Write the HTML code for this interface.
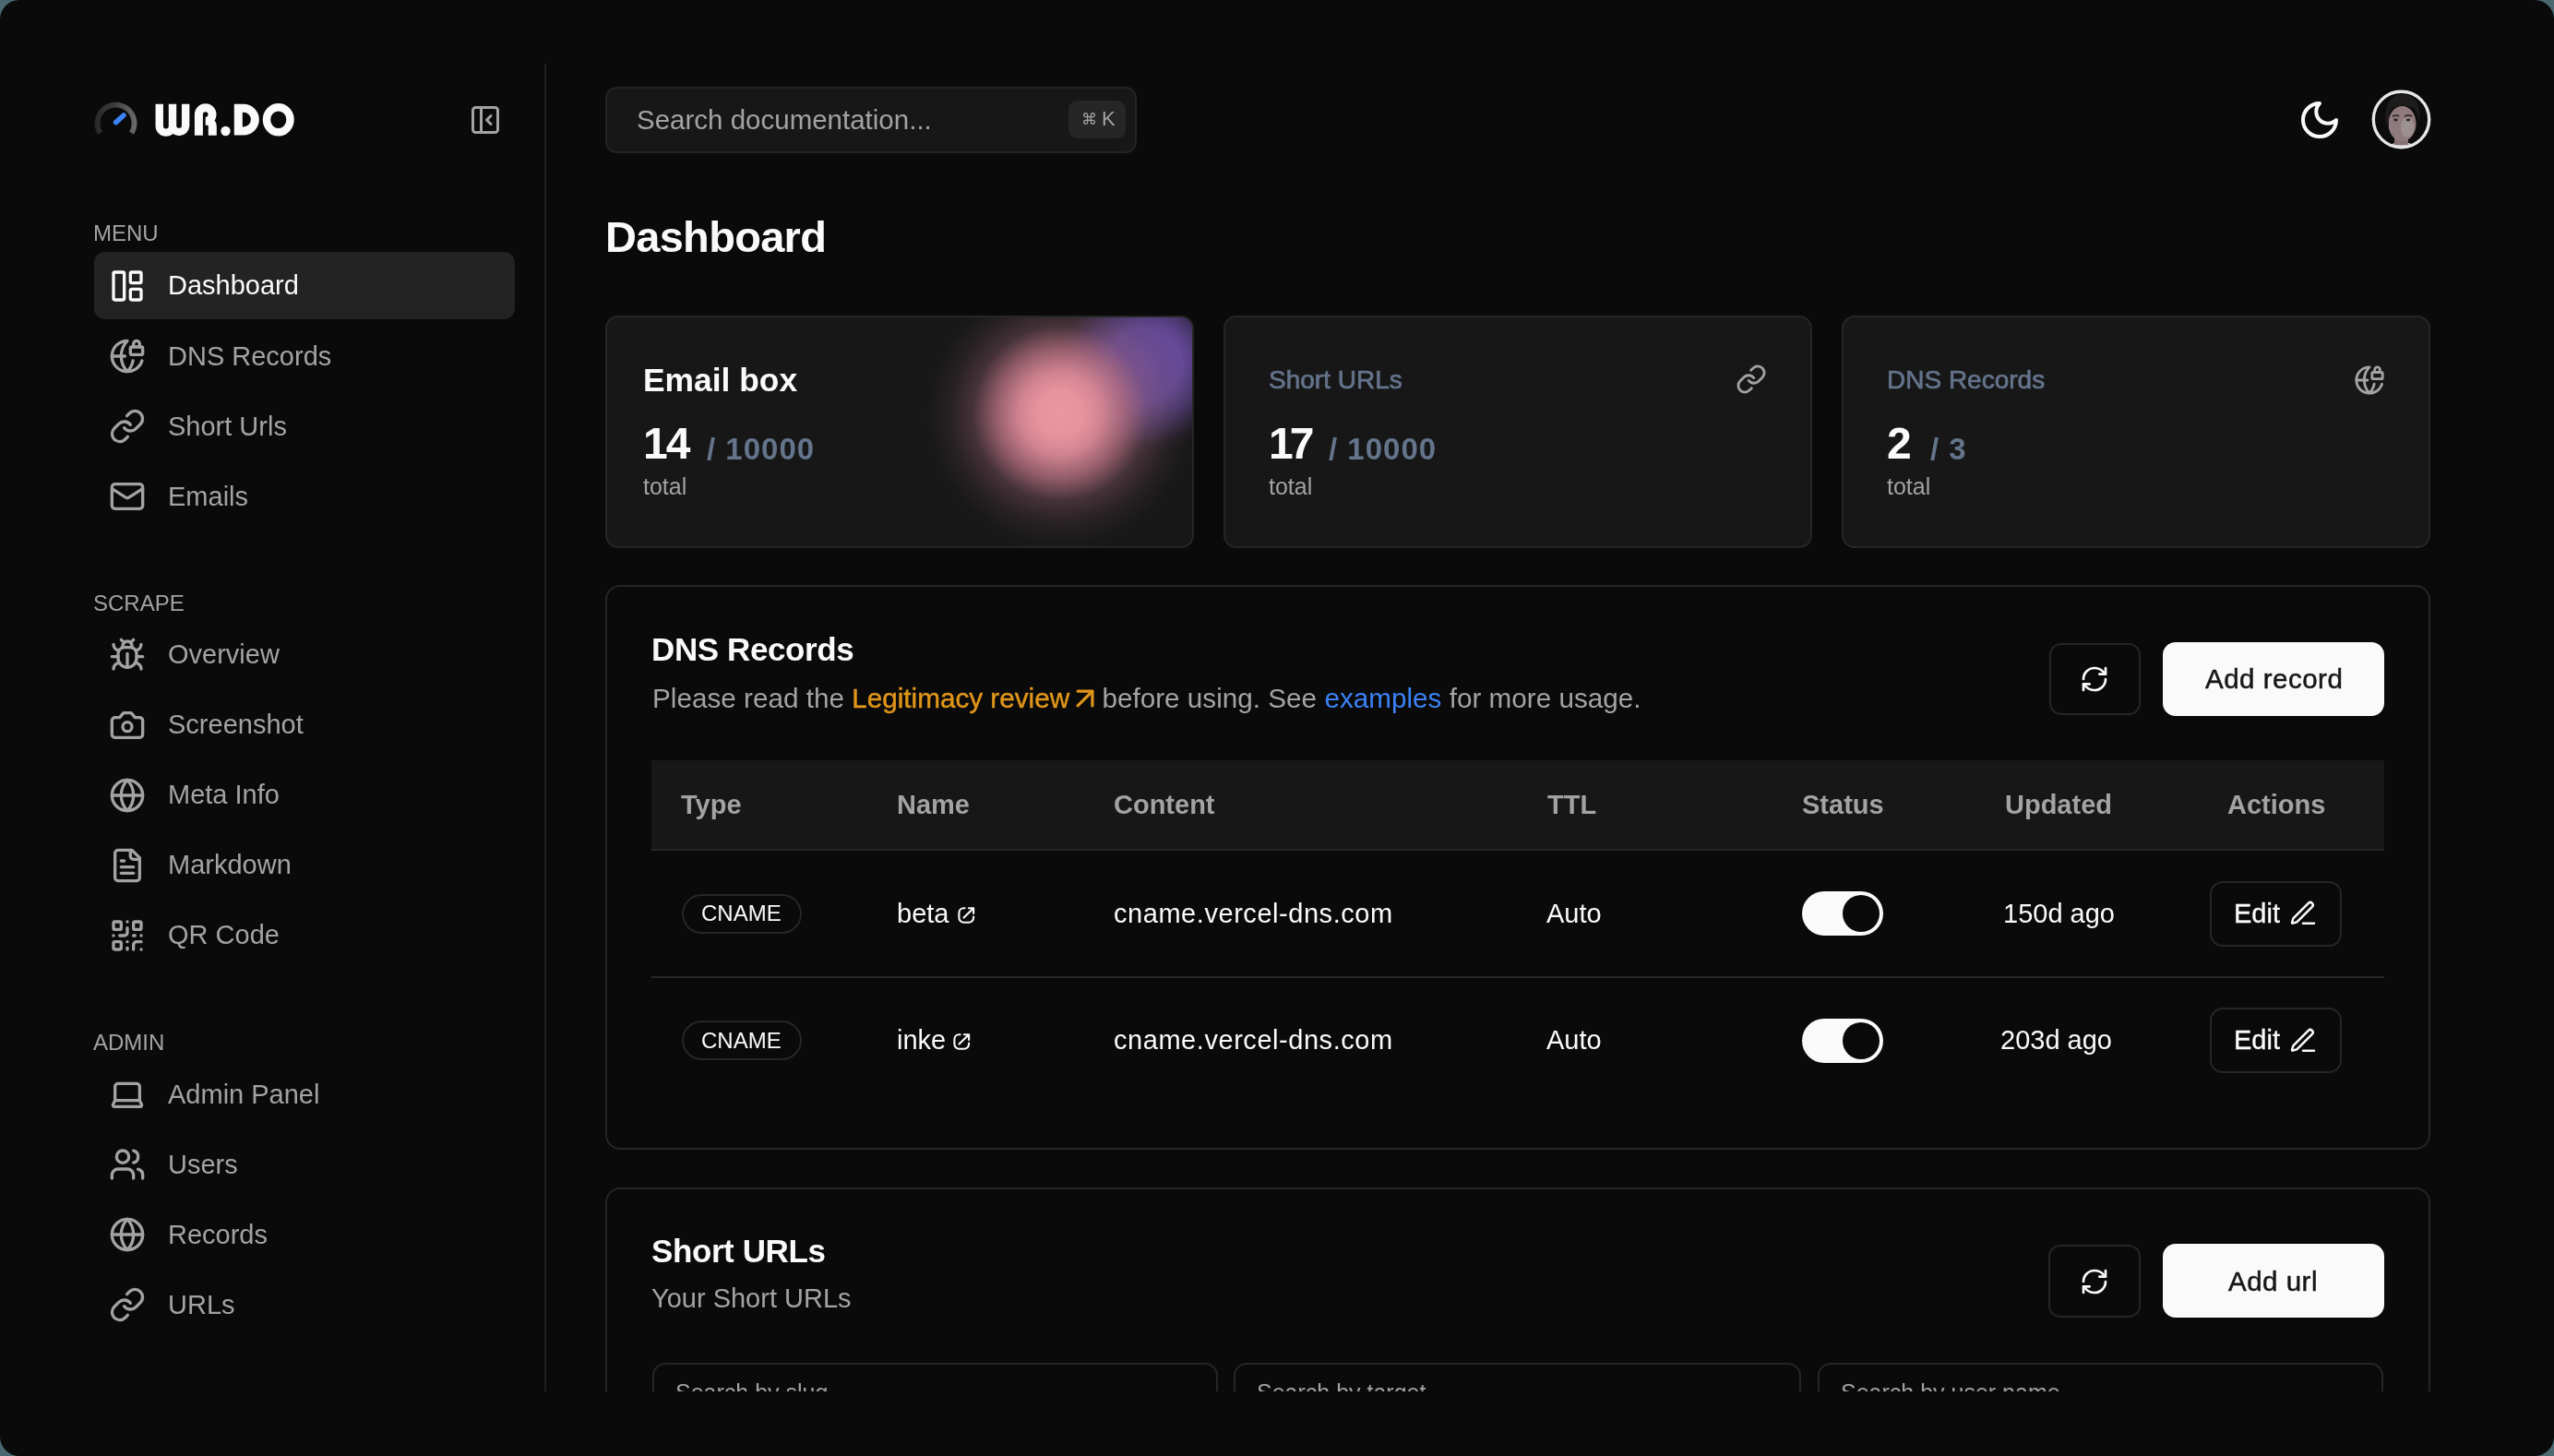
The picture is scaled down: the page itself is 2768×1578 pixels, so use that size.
<!DOCTYPE html>
<html><head><meta charset="utf-8"><style>
*{box-sizing:border-box;margin:0;padding:0}
html,body{width:2768px;height:1578px;overflow:hidden;background:#4b6770}
body{font-family:"Liberation Sans",sans-serif;color:#fafafa}
.win{position:absolute;left:0;top:0;width:2768px;height:1578px;background:#0a0a0a;border-radius:21px;overflow:hidden}
.clip{position:absolute;left:0;top:0;width:2768px;height:1508px;overflow:hidden}
.a{position:absolute}
.t{position:absolute;white-space:nowrap;line-height:1;will-change:transform}
.md{-webkit-text-stroke:0.45px currentColor}
</style></head><body>
<div class="win"><div class="clip">
<svg class="a" style="left:0;top:0" width="340" height="170" viewBox="0 0 340 170">
<defs><linearGradient id="gg" x1="100" x2="150" y1="0" y2="0" gradientUnits="userSpaceOnUse"><stop offset="0" stop-color="#262626"/><stop offset="0.45" stop-color="#3a3a3a"/><stop offset="1" stop-color="#707070"/></linearGradient></defs>
<path d="M108.5 144.1 A20 20 0 1 1 142.5 144.1" fill="none" stroke="url(#gg)" stroke-width="5.8"/>
<path d="M125.6 132.6 L134 125" stroke="#3b82f6" stroke-width="5.5" stroke-linecap="round"/>
<g fill="none" stroke="#fafafa" stroke-width="8.4">
<path d="M172.75 112.8 V136.5 A7.1 7.1 0 0 0 187 136.5 A7.1 7.1 0 0 0 201.15 136.5 V112.8 M187 112.8 V136.5"/>
<path d="M215.4 146.8 V124 A7.3 7.3 0 0 1 230 124 A7.3 7.3 0 0 1 222.7 131.3 H225 A5.3 5.3 0 0 1 230.3 136.6 V146.8" stroke-width="9"/>
<path d="M258.3 112.7 V146.5 M258.3 117.2 H264 A12.35 12.35 0 0 1 264 141.9 H258.3" stroke-width="9"/>
<ellipse cx="301.75" cy="129.75" rx="12.8" ry="13.5"/>
</g>
<circle cx="244.5" cy="142" r="5.2" fill="#fafafa"/>
</svg>
<svg class="a" style="left:508.0px;top:111.8px" width="36" height="36" viewBox="0 0 24 24" fill="none" stroke="#a3a3a3" stroke-width="2" stroke-linecap="round" stroke-linejoin="round"><rect width="18" height="18" x="3" y="3" rx="2"/><path d="M9 3v18"/><path d="m16 15-3-3 3-3"/></svg>
<div class="a" style="left:590px;top:69px;width:2px;height:1439px;background:#1f1f1f"></div>
<div class="t" style="left:100.5px;top:240.7px;font-size:24px;color:#a3a3a3;font-weight:400;">MENU</div>
<div class="a" style="left:102px;top:273px;width:456px;height:73px;background:#232323;border-radius:12px"></div>
<svg class="a" style="left:117.8px;top:289.6px" width="40" height="40" viewBox="0 0 24 24" fill="none" stroke="#fafafa" stroke-width="2" stroke-linecap="round" stroke-linejoin="round"><rect width="7" height="18" x="3" y="3" rx="1"/><rect width="7" height="7" x="14" y="3" rx="1"/><rect width="7" height="7" x="14" y="14" rx="1"/></svg>
<div class="t" style="left:181.5px;top:295.4px;font-size:29px;color:#fafafa;font-weight:400;">Dashboard</div>
<svg class="a" style="left:117.8px;top:365.8px" width="40" height="40" viewBox="0 0 24 24" fill="none" stroke="#a3a3a3" stroke-width="2" stroke-linecap="round" stroke-linejoin="round"><path d="M15.686 15A14.5 14.5 0 0 1 12 22a14.5 14.5 0 0 1 0-20 10 10 0 1 0 9.542 13"/><path d="M2 12h8.5"/><path d="M20 6V4a2 2 0 1 0-4 0v2"/><rect width="8" height="5" x="14" y="6" rx="1"/></svg>
<div class="t" style="left:181.5px;top:371.6px;font-size:29px;color:#a3a3a3;font-weight:400;">DNS Records</div>
<svg class="a" style="left:117.8px;top:441.7px" width="40" height="40" viewBox="0 0 24 24" fill="none" stroke="#a3a3a3" stroke-width="2" stroke-linecap="round" stroke-linejoin="round"><path d="M10 13a5 5 0 0 0 7.54.54l3-3a5 5 0 0 0-7.07-7.07l-1.72 1.71"/><path d="M14 11a5 5 0 0 0-7.54-.54l-3 3a5 5 0 0 0 7.07 7.07l1.71-1.71"/></svg>
<div class="t" style="left:181.5px;top:447.5px;font-size:29px;color:#a3a3a3;font-weight:400;">Short Urls</div>
<svg class="a" style="left:117.8px;top:517.7px" width="40" height="40" viewBox="0 0 24 24" fill="none" stroke="#a3a3a3" stroke-width="2" stroke-linecap="round" stroke-linejoin="round"><rect width="20" height="16" x="2" y="4" rx="2"/><path d="m22 7-8.97 5.7a1.94 1.94 0 0 1-2.06 0L2 7"/></svg>
<div class="t" style="left:181.5px;top:523.5px;font-size:29px;color:#a3a3a3;font-weight:400;">Emails</div>
<div class="t" style="left:100.5px;top:642.0px;font-size:24px;color:#a3a3a3;font-weight:400;">SCRAPE</div>
<svg class="a" style="left:117.8px;top:689.6px" width="40" height="40" viewBox="0 0 24 24" fill="none" stroke="#a3a3a3" stroke-width="2" stroke-linecap="round" stroke-linejoin="round"><path d="m8 2 1.88 1.88"/><path d="M14.12 3.88 16 2"/><path d="M9 7.13v-1a3.003 3.003 0 1 1 6 0v1"/><path d="M12 20c-3.3 0-6-2.7-6-6v-3a4 4 0 0 1 4-4h4a4 4 0 0 1 4 4v3c0 3.3-2.7 6-6 6"/><path d="M12 20v-9"/><path d="M6.53 9C4.6 8.8 3 7.1 3 5"/><path d="M6 13H2"/><path d="M3 21c0-2.1 1.7-3.9 3.8-4"/><path d="M20.97 5c0 2.1-1.6 3.8-3.5 4"/><path d="M22 13h-4"/><path d="M17.2 17c2.1.1 3.8 1.9 3.8 4"/></svg>
<div class="t" style="left:181.5px;top:695.4px;font-size:29px;color:#a3a3a3;font-weight:400;">Overview</div>
<svg class="a" style="left:117.8px;top:765.6px" width="40" height="40" viewBox="0 0 24 24" fill="none" stroke="#a3a3a3" stroke-width="2" stroke-linecap="round" stroke-linejoin="round"><path d="M14.5 4h-5L7 7H4a2 2 0 0 0-2 2v9a2 2 0 0 0 2 2h16a2 2 0 0 0 2-2V9a2 2 0 0 0-2-2h-3l-2.5-3z"/><circle cx="12" cy="13" r="3"/></svg>
<div class="t" style="left:181.5px;top:771.4px;font-size:29px;color:#a3a3a3;font-weight:400;">Screenshot</div>
<svg class="a" style="left:117.8px;top:841.6px" width="40" height="40" viewBox="0 0 24 24" fill="none" stroke="#a3a3a3" stroke-width="2" stroke-linecap="round" stroke-linejoin="round"><circle cx="12" cy="12" r="10"/><path d="M12 2a14.5 14.5 0 0 0 0 20 14.5 14.5 0 0 0 0-20"/><path d="M2 12h20"/></svg>
<div class="t" style="left:181.5px;top:847.4px;font-size:29px;color:#a3a3a3;font-weight:400;">Meta Info</div>
<svg class="a" style="left:117.8px;top:917.6px" width="40" height="40" viewBox="0 0 24 24" fill="none" stroke="#a3a3a3" stroke-width="2" stroke-linecap="round" stroke-linejoin="round"><path d="M15 2H6a2 2 0 0 0-2 2v16a2 2 0 0 0 2 2h12a2 2 0 0 0 2-2V7Z"/><path d="M14 2v4a2 2 0 0 0 2 2h4"/><path d="M10 9H8"/><path d="M16 13H8"/><path d="M16 17H8"/></svg>
<div class="t" style="left:181.5px;top:923.4px;font-size:29px;color:#a3a3a3;font-weight:400;">Markdown</div>
<svg class="a" style="left:117.8px;top:993.6px" width="40" height="40" viewBox="0 0 24 24" fill="none" stroke="#a3a3a3" stroke-width="2" stroke-linecap="round" stroke-linejoin="round"><rect width="5" height="5" x="3" y="3" rx="1"/><rect width="5" height="5" x="16" y="3" rx="1"/><rect width="5" height="5" x="3" y="16" rx="1"/><path d="M21 16h-3a2 2 0 0 0-2 2v3"/><path d="M21 21v.01"/><path d="M12 7v3a2 2 0 0 1-2 2H7"/><path d="M3 12h.01"/><path d="M12 3h.01"/><path d="M12 16v.01"/><path d="M16 12h1"/><path d="M21 12v.01"/><path d="M12 21v-1"/></svg>
<div class="t" style="left:181.5px;top:999.4px;font-size:29px;color:#a3a3a3;font-weight:400;">QR Code</div>
<div class="t" style="left:100.5px;top:1118.1px;font-size:24px;color:#a3a3a3;font-weight:400;">ADMIN</div>
<svg class="a" style="left:117.8px;top:1166.0px" width="40" height="40" viewBox="0 0 24 24" fill="none" stroke="#a3a3a3" stroke-width="2" stroke-linecap="round" stroke-linejoin="round"><path d="M20 16V7a2 2 0 0 0-2-2H6a2 2 0 0 0-2 2v9m16 0H4m16 0 1.28 2.55a1 1 0 0 1-.9 1.45H3.62a1 1 0 0 1-.9-1.45L4 16"/></svg>
<div class="t" style="left:181.5px;top:1171.8px;font-size:29px;color:#a3a3a3;font-weight:400;">Admin Panel</div>
<svg class="a" style="left:117.8px;top:1242.0px" width="40" height="40" viewBox="0 0 24 24" fill="none" stroke="#a3a3a3" stroke-width="2" stroke-linecap="round" stroke-linejoin="round"><path d="M16 21v-2a4 4 0 0 0-4-4H6a4 4 0 0 0-4 4v2"/><circle cx="9" cy="7" r="4"/><path d="M22 21v-2a4 4 0 0 0-3-3.87"/><path d="M16 3.13a4 4 0 0 1 0 7.75"/></svg>
<div class="t" style="left:181.5px;top:1247.8px;font-size:29px;color:#a3a3a3;font-weight:400;">Users</div>
<svg class="a" style="left:117.8px;top:1318.0px" width="40" height="40" viewBox="0 0 24 24" fill="none" stroke="#a3a3a3" stroke-width="2" stroke-linecap="round" stroke-linejoin="round"><circle cx="12" cy="12" r="10"/><path d="M12 2a14.5 14.5 0 0 0 0 20 14.5 14.5 0 0 0 0-20"/><path d="M2 12h20"/></svg>
<div class="t" style="left:181.5px;top:1323.8px;font-size:29px;color:#a3a3a3;font-weight:400;">Records</div>
<svg class="a" style="left:117.8px;top:1394.0px" width="40" height="40" viewBox="0 0 24 24" fill="none" stroke="#a3a3a3" stroke-width="2" stroke-linecap="round" stroke-linejoin="round"><path d="M10 13a5 5 0 0 0 7.54.54l3-3a5 5 0 0 0-7.07-7.07l-1.72 1.71"/><path d="M14 11a5 5 0 0 0-7.54-.54l-3 3a5 5 0 0 0 7.07 7.07l1.71-1.71"/></svg>
<div class="t" style="left:181.5px;top:1399.8px;font-size:29px;color:#a3a3a3;font-weight:400;">URLs</div>
<div class="a" style="left:656px;top:94px;width:576px;height:72px;background:#171717;border:2px solid #232323;border-radius:12px"></div>
<div class="t" style="left:689.5px;top:115.0px;font-size:29.5px;color:#a3a3a3;font-weight:400;">Search documentation...</div>
<div class="a" style="left:1158px;top:109px;width:62px;height:41px;background:#262626;border-radius:9px"></div>
<div class="t" style="left:1171.5px;top:121.1px;font-size:17px;color:#a3a3a3;font-weight:400;">⌘</div>
<div class="t" style="left:1194.0px;top:118.4px;font-size:22px;color:#a3a3a3;font-weight:400;">K</div>
<svg class="a" style="left:2490.0px;top:105.5px" width="48" height="48" viewBox="0 0 24 24" fill="none" stroke="#fafafa" stroke-width="2" stroke-linecap="round" stroke-linejoin="round"><path d="M12 3a6 6 0 0 0 9 9 9 9 0 1 1-9-9Z"/></svg>
<svg class="a" style="left:2568px;top:95px" width="69" height="69" viewBox="0 0 69 69">
<defs><clipPath id="av"><circle cx="34.5" cy="34.5" r="30"/></clipPath></defs>
<circle cx="34.5" cy="34.5" r="31" fill="#0c0c0c"/>
<g clip-path="url(#av)">
<ellipse cx="35" cy="69" rx="18" ry="10" fill="#b8b3b3"/>
<rect x="27" y="48" width="15" height="14" fill="#857276"/>
<ellipse cx="35.5" cy="39" rx="15" ry="19" fill="#8f7b7d"/>
<ellipse cx="41" cy="43" rx="7" ry="11" fill="#a9a3a2" opacity="0.55"/>
<path d="M18 40 Q14 10 35 7 Q57 7 54 38 Q52 25 47 22 Q36 17 25 22 Q20 27 21 42 Z" fill="#1d1b1b"/>
<path d="M25 31 Q29 29 32 31 M38 31 Q42 29 46 31" stroke="#2a2222" stroke-width="1.6" fill="none"/>
<ellipse cx="28.5" cy="35" rx="2.2" ry="1.4" fill="#222"/><ellipse cx="42" cy="35" rx="2.2" ry="1.4" fill="#222"/>
</g>
<circle cx="34.5" cy="34.5" r="30.2" fill="none" stroke="#e6e6e6" stroke-width="3.4"/>
</svg>
<div class="t" style="left:655.5px;top:233.2px;font-size:47px;color:#fafafa;font-weight:700;letter-spacing:-0.7px">Dashboard</div>
<div class="a" style="left:656px;top:342px;width:638px;height:252px;background:#171717;border:2px solid #262626;border-radius:14px"></div>
<div class="a" style="left:1326px;top:342px;width:638px;height:252px;background:#171717;border:2px solid #262626;border-radius:14px"></div>
<div class="a" style="left:1996px;top:342px;width:638px;height:252px;background:#171717;border:2px solid #262626;border-radius:14px"></div>
<div class="a" style="left:658px;top:344px;width:634px;height:248px;border-radius:12px;overflow:hidden">
<div class="a" style="left:0;top:0;width:634px;height:248px;background:radial-gradient(circle 95px at 582px 52px, rgba(118,82,178,1) 0px, rgba(112,80,170,0.95) 40px, rgba(95,70,150,0.6) 65px, rgba(60,45,90,0.2) 85px, rgba(40,35,50,0) 95px)"></div>
<div class="a" style="left:0;top:0;width:634px;height:248px;background:radial-gradient(circle 155px at 491px 104px, rgba(236,150,160,1) 0px, rgba(232,146,156,1) 25px, rgba(215,135,150,0.96) 45px, rgba(175,108,125,0.82) 70px, rgba(125,82,98,0.45) 95px, rgba(85,62,70,0.25) 120px, rgba(50,40,44,0.12) 140px, rgba(23,23,23,0) 155px)"></div>
</div>
<div class="t" style="left:697.1px;top:394.5px;font-size:35.4px;color:#fafafa;font-weight:700;">Email box</div>
<div class="t" style="left:696.5px;top:457.1px;font-size:48px;color:#fafafa;font-weight:700;letter-spacing:-2px">14</div>
<div class="t" style="left:765.5px;top:469.8px;font-size:33px;color:#64748b;font-weight:700;letter-spacing:1px">/ 10000</div>
<div class="t" style="left:697.0px;top:514.6px;font-size:25px;color:#a3a3a3;font-weight:400;">total</div>
<div class="t" style="left:1375.0px;top:398.2px;font-size:28px;color:#64748b;font-weight:400;-webkit-text-stroke:0.7px #64748b">Short URLs</div>
<svg class="a" style="left:1880.5px;top:394.3px" width="34" height="34" viewBox="0 0 24 24" fill="none" stroke="#a3a3a3" stroke-width="2" stroke-linecap="round" stroke-linejoin="round"><path d="M10 13a5 5 0 0 0 7.54.54l3-3a5 5 0 0 0-7.07-7.07l-1.72 1.71"/><path d="M14 11a5 5 0 0 0-7.54-.54l-3 3a5 5 0 0 0 7.07 7.07l1.71-1.71"/></svg>
<div class="t" style="left:1375.0px;top:457.1px;font-size:48px;color:#fafafa;font-weight:700;letter-spacing:-4px">17</div>
<div class="t" style="left:1439.5px;top:469.8px;font-size:33px;color:#64748b;font-weight:700;letter-spacing:1px">/ 10000</div>
<div class="t" style="left:1375.0px;top:514.6px;font-size:25px;color:#a3a3a3;font-weight:400;">total</div>
<div class="t" style="left:2045.0px;top:398.2px;font-size:28px;color:#64748b;font-weight:400;-webkit-text-stroke:0.7px #64748b">DNS Records</div>
<svg class="a" style="left:2551.4px;top:394.5px" width="34" height="34" viewBox="0 0 24 24" fill="none" stroke="#a3a3a3" stroke-width="2" stroke-linecap="round" stroke-linejoin="round"><path d="M15.686 15A14.5 14.5 0 0 1 12 22a14.5 14.5 0 0 1 0-20 10 10 0 1 0 9.542 13"/><path d="M2 12h8.5"/><path d="M20 6V4a2 2 0 1 0-4 0v2"/><rect width="8" height="5" x="14" y="6" rx="1"/></svg>
<div class="t" style="left:2045.0px;top:457.1px;font-size:48px;color:#fafafa;font-weight:700;letter-spacing:-2px">2</div>
<div class="t" style="left:2091.5px;top:469.8px;font-size:33px;color:#64748b;font-weight:700;letter-spacing:1px">/ 3</div>
<div class="t" style="left:2045.0px;top:514.6px;font-size:25px;color:#a3a3a3;font-weight:400;">total</div>
<div class="a" style="left:656px;top:634px;width:1978px;height:612px;border:2px solid #262626;border-radius:16px"></div>
<div class="t" style="left:705.5px;top:685.8px;font-size:35px;color:#fafafa;font-weight:700;letter-spacing:-0.4px">DNS Records</div>
<div class="t" style="left:707px;top:741.6px;font-size:29.7px;color:#a3a3a3">Please read the <span style="color:#e0961a" class="md">Legitimacy review</span><span style="display:inline-block;width:27px"></span> before using. See <span style="color:#3b82f6">examples</span> for more usage.</div>
<svg class="a" style="left:1157.0px;top:738.0px" width="38" height="38" viewBox="0 0 24 24" fill="none" stroke="#e0961a" stroke-width="2" stroke-linecap="round" stroke-linejoin="round"><path d="M7 7h10v10"/><path d="M7 17 17 7"/></svg>
<div class="a" style="left:2221px;top:697px;width:99px;height:78px;border:2px solid #262626;border-radius:13px"></div>
<svg class="a" style="left:2254.0px;top:720.0px" width="32" height="32" viewBox="0 0 24 24" fill="none" stroke="#fafafa" stroke-width="2" stroke-linecap="round" stroke-linejoin="round"><path d="M3 12a9 9 0 0 1 9-9 9.75 9.75 0 0 1 6.74 2.74L21 8"/><path d="M21 3v5h-5"/><path d="M21 12a9 9 0 0 1-9 9 9.75 9.75 0 0 1-6.74-2.74L3 16"/><path d="M8 16H3v5"/></svg>
<div class="a" style="left:2344px;top:696px;width:240px;height:80px;background:#fafafa;border-radius:14px"></div>
<div class="t" style="left:2389.5px;top:721.2px;font-size:29.5px;color:#171717;font-weight:400;-webkit-text-stroke:0.5px #171717;letter-spacing:0.5px">Add record</div>
<div class="a" style="left:706px;top:824px;width:1878px;height:98px;background:#171717;border-bottom:2px solid #262626"></div>
<div class="t" style="left:737.5px;top:857.9px;font-size:29px;color:#a3a3a3;font-weight:700;">Type</div>
<div class="t" style="left:971.5px;top:857.9px;font-size:29px;color:#a3a3a3;font-weight:700;">Name</div>
<div class="t" style="left:1206.5px;top:857.9px;font-size:29px;color:#a3a3a3;font-weight:700;">Content</div>
<div class="t" style="left:1676.5px;top:857.9px;font-size:29px;color:#a3a3a3;font-weight:700;">TTL</div>
<div class="t" style="left:1952.5px;top:857.9px;font-size:29px;color:#a3a3a3;font-weight:700;">Status</div>
<div class="t" style="left:2172.9px;top:857.9px;font-size:29px;color:#a3a3a3;font-weight:700;">Updated</div>
<div class="t" style="left:2414.0px;top:857.9px;font-size:29px;color:#a3a3a3;font-weight:700;">Actions</div>
<div class="a" style="left:706px;top:1058px;width:1878px;height:2px;background:#262626"></div>
<div class="a" style="left:739px;top:968.5px;width:130px;height:43.0px;border:2px solid #262626;border-radius:22px"></div>
<div class="t" style="left:759.5px;top:978.4px;font-size:24px;color:#fafafa;font-weight:400;">CNAME</div>
<div class="t" style="left:972.0px;top:975.6px;font-size:29px;color:#fafafa;font-weight:400;">beta</div>
<svg class="a" style="left:1037.9px;top:982.9px" width="19" height="19" viewBox="0 0 19 19" fill="none" stroke="#fafafa" stroke-width="2.1" stroke-linecap="round" stroke-linejoin="round"><path d="M7.6 1.2 H6.4 A5.2 5.2 0 0 0 1.4 6.4 V11.6 A5.2 5.2 0 0 0 6.6 16.8 H11.9 A5.2 5.2 0 0 0 17.1 11.6 V10.6 M11.9 1.2 H17.1 V7 M6.5 11.6 L16.6 1.7"/></svg>
<div class="t" style="left:1207.3px;top:975.6px;font-size:29px;color:#fafafa;font-weight:400;letter-spacing:0.55px">cname.vercel-dns.com</div>
<div class="t" style="left:1676.2px;top:975.6px;font-size:29px;color:#fafafa;font-weight:400;">Auto</div>
<div class="a" style="left:1953px;top:966.0px;width:88px;height:48.0px;background:#fafafa;border-radius:24px"></div>
<div class="a" style="left:1997px;top:970.0px;width:40px;height:40.0px;background:#0a0a0a;border-radius:50%"></div>
<div class="t" style="left:2170.8px;top:975.6px;font-size:29px;color:#fafafa;font-weight:400;">150d ago</div>
<div class="a" style="left:2395px;top:954.5px;width:143px;height:71.0px;border:2px solid #262626;border-radius:14px"></div>
<div class="t" style="left:2420.5px;top:975.6px;font-size:29px;color:#fafafa;font-weight:400;-webkit-text-stroke:0.3px #fafafa">Edit</div>
<svg class="a" style="left:2480.0px;top:974.2px" width="32" height="32" viewBox="0 0 24 24" fill="none" stroke="#fafafa" stroke-width="1.85" stroke-linecap="round" stroke-linejoin="round"><path d="M12 20h9"/><path d="M16.376 3.622a1 1 0 0 1 3.002 3.002L7.368 18.635a2 2 0 0 1-.855.506l-2.872.838a.5.5 0 0 1-.62-.62l.838-2.872a2 2 0 0 1 .506-.854z"/></svg>
<div class="a" style="left:739px;top:1106.0px;width:130px;height:43.0px;border:2px solid #262626;border-radius:22px"></div>
<div class="t" style="left:759.5px;top:1115.9px;font-size:24px;color:#fafafa;font-weight:400;">CNAME</div>
<div class="t" style="left:972.0px;top:1113.1px;font-size:29px;color:#fafafa;font-weight:400;">inke</div>
<svg class="a" style="left:1033.4px;top:1120.4px" width="19" height="19" viewBox="0 0 19 19" fill="none" stroke="#fafafa" stroke-width="2.1" stroke-linecap="round" stroke-linejoin="round"><path d="M7.6 1.2 H6.4 A5.2 5.2 0 0 0 1.4 6.4 V11.6 A5.2 5.2 0 0 0 6.6 16.8 H11.9 A5.2 5.2 0 0 0 17.1 11.6 V10.6 M11.9 1.2 H17.1 V7 M6.5 11.6 L16.6 1.7"/></svg>
<div class="t" style="left:1207.3px;top:1113.1px;font-size:29px;color:#fafafa;font-weight:400;letter-spacing:0.55px">cname.vercel-dns.com</div>
<div class="t" style="left:1676.2px;top:1113.1px;font-size:29px;color:#fafafa;font-weight:400;">Auto</div>
<div class="a" style="left:1953px;top:1103.5px;width:88px;height:48.0px;background:#fafafa;border-radius:24px"></div>
<div class="a" style="left:1997px;top:1107.5px;width:40px;height:40.0px;background:#0a0a0a;border-radius:50%"></div>
<div class="t" style="left:2167.5px;top:1113.1px;font-size:29px;color:#fafafa;font-weight:400;">203d ago</div>
<div class="a" style="left:2395px;top:1092.0px;width:143px;height:71.0px;border:2px solid #262626;border-radius:14px"></div>
<div class="t" style="left:2420.5px;top:1113.1px;font-size:29px;color:#fafafa;font-weight:400;-webkit-text-stroke:0.3px #fafafa">Edit</div>
<svg class="a" style="left:2480.0px;top:1111.7px" width="32" height="32" viewBox="0 0 24 24" fill="none" stroke="#fafafa" stroke-width="1.85" stroke-linecap="round" stroke-linejoin="round"><path d="M12 20h9"/><path d="M16.376 3.622a1 1 0 0 1 3.002 3.002L7.368 18.635a2 2 0 0 1-.855.506l-2.872.838a.5.5 0 0 1-.62-.62l.838-2.872a2 2 0 0 1 .506-.854z"/></svg>
<div class="a" style="left:656px;top:1287px;width:1978px;height:413px;border:2px solid #262626;border-radius:16px"></div>
<div class="t" style="left:705.5px;top:1337.7px;font-size:35px;color:#fafafa;font-weight:700;letter-spacing:-0.4px">Short URLs</div>
<div class="t" style="left:705.5px;top:1393.4px;font-size:29px;color:#a3a3a3;font-weight:400;">Your Short URLs</div>
<div class="a" style="left:2220px;top:1349px;width:100px;height:79px;border:2px solid #262626;border-radius:13px"></div>
<svg class="a" style="left:2254.0px;top:1372.5px" width="32" height="32" viewBox="0 0 24 24" fill="none" stroke="#fafafa" stroke-width="2" stroke-linecap="round" stroke-linejoin="round"><path d="M3 12a9 9 0 0 1 9-9 9.75 9.75 0 0 1 6.74 2.74L21 8"/><path d="M21 3v5h-5"/><path d="M21 12a9 9 0 0 1-9 9 9.75 9.75 0 0 1-6.74-2.74L3 16"/><path d="M8 16H3v5"/></svg>
<div class="a" style="left:2344px;top:1348px;width:240px;height:80px;background:#fafafa;border-radius:14px"></div>
<div class="t" style="left:2414.5px;top:1373.5px;font-size:29.5px;color:#171717;font-weight:400;-webkit-text-stroke:0.5px #171717;letter-spacing:0.5px">Add url</div>
<div class="a" style="left:707px;top:1477px;width:613px;height:100px;border:2px solid #262626;border-radius:14px"></div>
<div class="t" style="left:732.0px;top:1496.5px;font-size:25px;color:#a3a3a3;font-weight:400;">Search by slug</div>
<div class="a" style="left:1337px;top:1477px;width:615px;height:100px;border:2px solid #262626;border-radius:14px"></div>
<div class="t" style="left:1362.0px;top:1496.5px;font-size:25px;color:#a3a3a3;font-weight:400;">Search by target</div>
<div class="a" style="left:1970px;top:1477px;width:613px;height:100px;border:2px solid #262626;border-radius:14px"></div>
<div class="t" style="left:1995.0px;top:1496.5px;font-size:25px;color:#a3a3a3;font-weight:400;">Search by user name</div>

</div></div>
</body></html>
